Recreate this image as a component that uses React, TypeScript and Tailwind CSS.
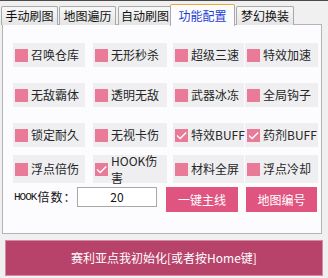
import React from "react";

const FONT = { fontFamily: '"Noto Sans CJK SC", "Noto Sans", sans-serif' };

function Box({ checked }: { checked?: boolean }) {
  return (
    <div className="w-[13px] h-[13px] bg-[#e97a98] shrink-0 flex items-center justify-center">
      {checked ? (
        <svg width="13" height="13" viewBox="0 0 13 13">
          <polyline points="2,6.5 5.2,9.6 11.2,3.4" fill="none" stroke="#ffffff" strokeWidth="1.4" />
        </svg>
      ) : null}
    </div>
  );
}

function Item({ label, checked, cls, lead }: { label: React.ReactNode; checked?: boolean; cls: string; lead?: string }) {
  return (
    <div className={"flex items-center h-full bg-[#efeff1] pl-[2px] gap-[3px] " + cls}>
      <Box checked={checked} />
      <span className={"text-[12px] text-[#262626] whitespace-nowrap " + (lead ?? "leading-[14px]")}>{label}</span>
    </div>
  );
}

function Tab({ label, cls }: { label: string; cls: string }) {
  return (
    <div
      className={
        "h-[19px] border border-b-0 border-[#a9a9a9] rounded-t-[2px] bg-gradient-to-b from-[#f8f8f8] to-[#e5e5e5] flex items-center justify-center text-[12px] text-[#111] " +
        cls
      }
    >
      {label}
    </div>
  );
}

export default function App() {
  return (
    <div className="w-[328px] h-[278px] bg-[#f0f0f0] overflow-hidden" style={FONT}>
      <div className="h-px bg-[#4a4a4a]" />
      <div className="h-[24px] flex items-end pl-[1px]">
        <Tab label="手动刷图" cls="w-[57px]" />
        <Tab label="地图遍历" cls="w-[57px] ml-[1px]" />
        <Tab label="自动刷图" cls="w-[54px] ml-[2px]" />
        <div className="relative z-10 h-[22px] -mb-px w-[65px] ml-[-2px] border border-b-0 border-[#a9a9a9] border-t-[#f0a830] rounded-t-[2px] bg-[#fcfcfe] flex items-center justify-center text-[12px] text-[#1d3fd0]">
          功能配置
        </div>
        <Tab label="梦幻换装" cls="w-[58px] ml-[1px]" />
      </div>
      <div className="-mt-px ml-[2px] w-[320px] h-[210px] border border-[#b4b4b4] bg-[#fcfcfe] pt-[18px] pl-[10px] flex flex-col">
        <div className="flex h-[24px]">
          <Item label="召唤仓库" cls="w-[72px]" />
          <Item label="无形秒杀" cls="w-[74px] ml-[8px]" />
          <Item label="超级三速" cls="w-[71px] ml-[6px]" />
          <Item label="特效加速" cls="w-[73px] ml-[1px]" />
        </div>
        <div className="flex h-[24px] mt-[16px]">
          <Item label="无敌霸体" cls="w-[72px]" />
          <Item label="透明无敌" cls="w-[74px] ml-[8px]" />
          <Item label="武器冰冻" cls="w-[71px] ml-[6px]" />
          <Item label="全局钩子" cls="w-[73px] ml-[1px]" />
        </div>
        <div className="flex h-[24px] mt-[16px]">
          <Item label="锁定耐久" cls="w-[72px]" />
          <Item label="无视卡伤" cls="w-[74px] ml-[8px]" />
          <Item label="特效BUFF" checked cls="w-[71px] ml-[6px]" />
          <Item label="药剂BUFF" checked cls="w-[73px] ml-[1px]" />
        </div>
        <div className="flex h-[28px] mt-[8px]">
          <Item label="浮点倍伤" cls="w-[72px]" />
          <Item
            label={
              <>
                HOOK伤
                <br />害
              </>
            }
            checked
            lead="leading-[17.5px]"
            cls="w-[74px] ml-[8px]"
          />
          <Item label="材料全屏" cls="w-[71px] ml-[6px]" />
          <Item label="浮点冷却" cls="w-[73px] ml-[1px]" />
        </div>
        <div className="flex items-start mt-[4px] pl-[1px]">
          <div className="w-[63px] h-[20px] flex items-center text-[12px] text-[#111]">
            <span className="text-[11px] tracking-[-1px]" style={{ fontFamily: '"Liberation Mono", monospace' }}>
              HOOK
            </span>
            <span className="ml-[1px] tracking-[1px]">倍数：</span>
          </div>
          <div className="w-[80px] h-[20px] border border-[#a8a8a8] bg-white flex items-center justify-center text-[12px] text-[#111]">
            20
          </div>
          <div className="w-[72px] h-[25px] ml-[9px] bg-[#e0557f] text-white text-[12px] flex items-center justify-center">
            一键主线
          </div>
          <div className="w-[71px] h-[25px] ml-[8px] bg-[#e0557f] text-white text-[12px] flex items-center justify-center">
            地图编号
          </div>
        </div>
      </div>
      <div className="mt-[6px] ml-[5px] w-[318px] h-[36px] bg-[#b8436a] border border-[#d88aa4] flex items-center justify-center text-white text-[12px]">
        赛利亚点我初始化[或者按Home键]
      </div>
    </div>
  );
}
